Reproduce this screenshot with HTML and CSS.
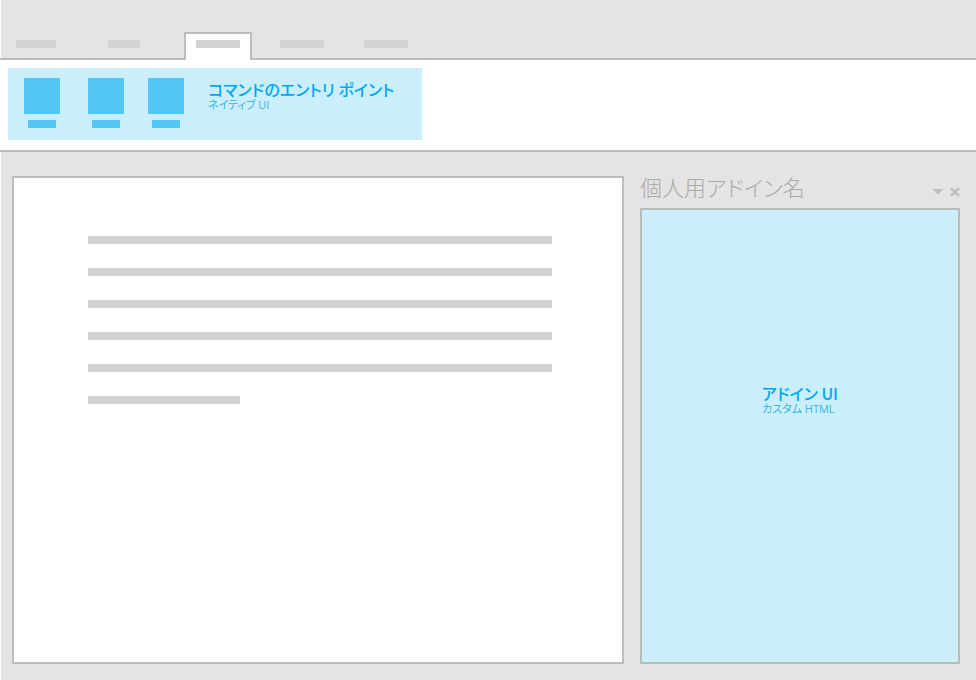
FILE: index.html
```html
<!DOCTYPE html>
<html lang="ja">
<head>
<meta charset="utf-8">
<title>個人用アドイン名</title>
<link rel="stylesheet" href="styles.css">
</head>
<body>
<div class="app">
  <nav class="tabs">
    <button class="tab" type="button"><span class="bar"></span></button>
    <button class="tab" type="button"><span class="bar bar-short"></span></button>
    <button class="tab tab-active" type="button"><span class="bar bar-long"></span></button>
    <button class="tab" type="button"><span class="bar bar-long"></span></button>
    <button class="tab" type="button"><span class="bar bar-long"></span></button>
  </nav>
  <section class="ribbon">
    <div class="group">
      <div class="commands">
        <button class="command" type="button"><span class="command-icon"></span><span class="command-label"></span></button>
        <button class="command" type="button"><span class="command-icon"></span><span class="command-label"></span></button>
        <button class="command" type="button"><span class="command-icon"></span><span class="command-label"></span></button>
      </div>
      <div class="caption">
        <h2 class="title">コマンドのエントリ ポイント</h2>
        <p class="subtitle">ネイティブ UI</p>
      </div>
    </div>
  </section>
  <main class="workspace">
    <article class="document">
      <div class="line"></div>
      <div class="line"></div>
      <div class="line"></div>
      <div class="line"></div>
      <div class="line"></div>
      <div class="line line-last"></div>
    </article>
    <aside class="pane">
      <header class="pane-header">
        <h1 class="pane-name">個人用アドイン名</h1>
        <div class="pane-tools">
          <button class="tool" type="button"><svg width="12" height="10" viewBox="0 0 12 10"><path d="M0.5 2h11L6 7.5z" fill="#bdbdbd"/></svg></button>
          <button class="tool" type="button"><svg width="10" height="10" viewBox="0 0 10 10"><path d="M1 1l8 8M9 1L1 9" stroke="#bdbdbd" stroke-width="2.4" fill="none"/></svg></button>
        </div>
      </header>
      <div class="pane-body">
        <div>
          <h2 class="title">アドイン UI</h2>
          <p class="subtitle">カスタム HTML</p>
        </div>
      </div>
    </aside>
  </main>
</div>
</body>
</html>
```
FILE: styles.css
```css
* {
  box-sizing: border-box;
}

body {
  margin: 0;
  background: #fff;
  font-family: "Noto Sans CJK JP", sans-serif;
  font-feature-settings: "palt";
}

h1, h2, p {
  margin: 0;
}

button {
  padding: 0;
  border: 0;
  background: none;
}

.app {
  display: flex;
  flex-direction: column;
  min-height: 100vh;
}

.tabs {
  display: grid;
  grid-template-columns: 72px 104px 84px 84px 84px;
  align-items: end;
  height: 60px;
  border-bottom: 2px solid #bcbcbc;
  background: linear-gradient(#e4e4e4, #e4e4e4) 1px 0 no-repeat;
}

.tab {
  display: flex;
  justify-content: center;
  height: 26px;
  padding-top: 8px;
}

.tab-active {
  height: 28px;
  margin: 0 8px -2px;
  padding-top: 6px;
  border: 2px solid #bcbcbc;
  border-bottom: 0;
  background: #fff;
}

.bar {
  width: 40px;
  height: 8px;
  background: #d0d2d3;
}

.bar-short {
  width: 32px;
}

.bar-long {
  width: 44px;
}

.ribbon {
  padding: 8px 8px 10px;
  border-bottom: 2px solid #bcbcbc;
}

.group {
  display: flex;
  width: fit-content;
  min-width: 414px;
  height: 72px;
  padding: 10px 16px;
  background: #caeefb;
}

.commands {
  display: flex;
  gap: 24px;
}

.command {
  display: flex;
  flex-direction: column;
  align-items: center;
  gap: 6px;
}

.command:first-child {
  margin-right: 4px;
}

.command-icon {
  width: 36px;
  height: 36px;
  background: #52c7f4;
}

.command-label {
  width: 28px;
  height: 8px;
  background: #52c7f4;
}

.caption {
  margin-left: 24px;
}

.title {
  color: #00a8f0;
  font-size: 16px;
  font-weight: 500;
  line-height: 22px;
}

.subtitle {
  color: #35b4ec;
  font-family: "Open Sans", "Noto Sans CJK JP", sans-serif;
  font-size: 11px;
  font-weight: 400;
  line-height: 10px;
}

.workspace {
  display: grid;
  grid-template-columns: minmax(0, 1fr) 320px;
  gap: 16px;
  flex: 1;
  margin-left: 1px;
  padding: 24px 16px 16px 11px;
  background: #e4e4e4;
}

.document {
  display: flex;
  flex-direction: column;
  gap: 24px;
  padding: 58px 70px 58px 74px;
  border: 2px solid #bcbcbc;
  background: #fff;
}

.line {
  height: 8px;
  background: #d2d2d2;
}

.line-last {
  width: 152px;
}

.pane {
  display: flex;
  flex-direction: column;
}

.pane-header {
  display: flex;
  justify-content: space-between;
  height: 32px;
}

.pane-name {
  color: #aaa;
  font-size: 22px;
  font-weight: 300;
  line-height: 20px;
}

.pane-tools {
  display: flex;
  align-items: center;
  gap: 6px;
}

.tool {
  display: flex;
}

.pane-body {
  display: flex;
  flex: 1;
  align-items: center;
  justify-content: center;
  padding-bottom: 76px;
  border: 2px solid #bcbcbc;
  background: #caeefb;
}
```
